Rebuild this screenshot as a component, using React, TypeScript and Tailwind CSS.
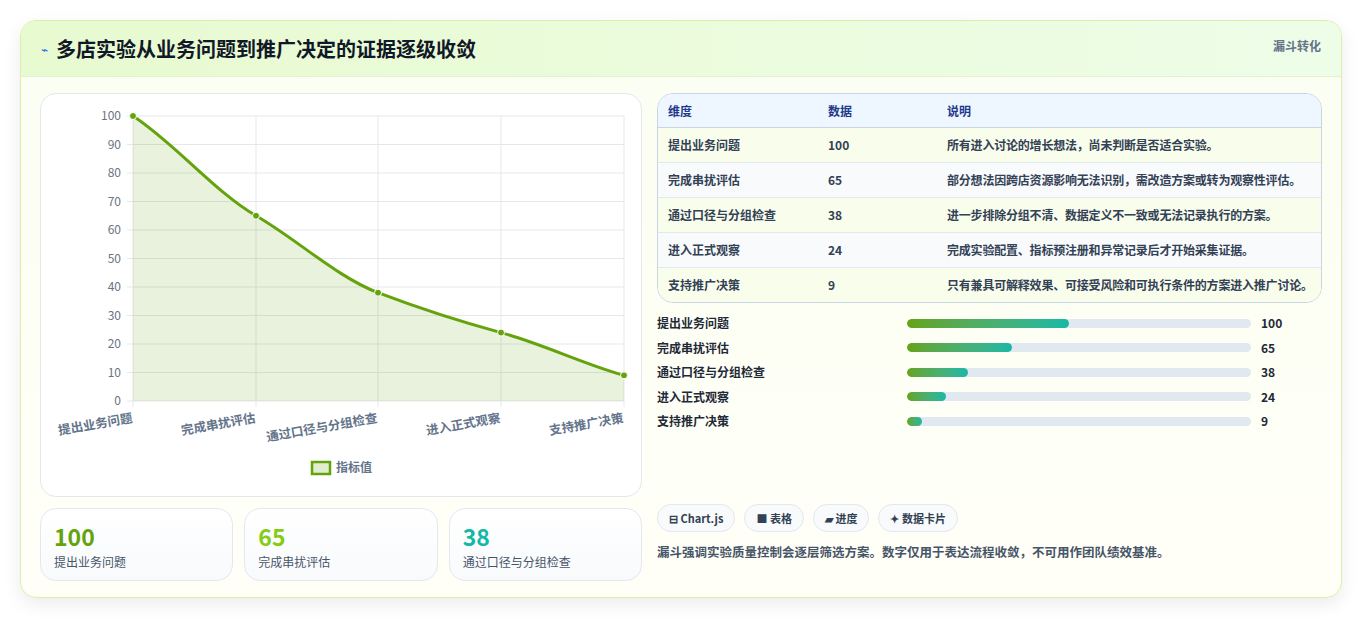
const rows = [
  ["提出业务问题", 100, "所有进入讨论的增长想法，尚未判断是否适合实验。"],
  ["完成串扰评估", 65, "部分想法因跨店资源影响无法识别，需改造方案或转为观察性评估。"],
  ["通过口径与分组检查", 38, "进一步排除分组不清、数据定义不一致或无法记录执行的方案。"],
  ["进入正式观察", 24, "完成实验配置、指标预注册和异常记录后才开始采集证据。"],
  ["支持推广决策", 9, "只有兼具可解释效果、可接受风险和可执行条件的方案进入推广讨论。"],
] as const;

function Chart() {
  const xs = [92, 215, 337, 460, 583];
  const y = (v: number) => 22 + (100 - v) * 2.85;
  const pts = rows.map((r, i) => [xs[i], y(r[1])]);
  const slope = (i: number) => {
    const a = pts[Math.max(0, i - 1)], b = pts[Math.min(pts.length - 1, i + 1)];
    return (b[1] - a[1]) / (b[0] - a[0]);
  };
  const line = "M" + pts.map((p, i) => {
    if (i === 0) return `${p[0]},${p[1]}`;
    const prev = pts[i - 1];
    const dx = (p[0] - prev[0]) / 3;
    return ` C${prev[0] + dx},${prev[1] + slope(i - 1) * dx * 0.8} ${p[0] - dx},${p[1] - slope(i) * dx * 0.8} ${p[0]},${p[1]}`;
  }).join("");
  return (
    <svg width="600" height="400" className="block">
      {[0, 10, 20, 30, 40, 50, 60, 70, 80, 90, 100].map((v) => (
        <g key={v}>
          <line x1={86} x2={583} y1={y(v)} y2={y(v)} stroke="#e5e7eb" />
          <text x={80} y={y(v) + 4} textAnchor="end" fontSize="12" fill="#6b7280">{v}</text>
        </g>
      ))}
      {xs.map((x) => <line key={x} x1={x} x2={x} y1={22} y2={313} stroke="#e5e7eb" />)}
      <path d={line + ` L583,307 L92,307 Z`} fill="#65a30d" fillOpacity="0.14" />
      <path d={line} fill="none" stroke="#65a30d" strokeWidth="3" />
      {pts.map((p, i) => <circle key={i} cx={p[0]} cy={p[1]} r="3.5" fill="#65a30d" stroke="#fff" strokeWidth="1" />)}
      {rows.map((r, i) => (
        <text key={i} x={xs[i]} y={328} textAnchor="end" fontSize="12.5" fontWeight="600" fill="#64748b" transform={`rotate(-10 ${xs[i]} 328)`}>{r[0]}</text>
      ))}
      <rect x={271} y={368} width={18} height={12} fill="#65a30d" fillOpacity="0.2" stroke="#65a30d" strokeWidth="2.5" />
      <text x={295} y={378} fontSize="12" fill="#64748b" fontWeight="600">指标值</text>
    </svg>
  );
}

export default function App() {
  const f = { fontFamily: '"Noto Sans CJK SC", "Noto Sans", sans-serif' };
  return (
    <div style={f} className="w-[1363px] h-[621px] bg-white pt-[20px] pl-[20px]">
      <div className="w-[1322px] h-[578px] rounded-2xl border border-[#d9f0a8] bg-gradient-to-b from-[#fbfef2] to-[#fffff7] shadow-[0_6px_18px_rgba(0,0,0,0.08)] overflow-hidden">
        <div className="h-[56px] flex items-center justify-between px-[20px] bg-gradient-to-r from-[#e8fad0] to-[#eefde8] border-b border-[#e3f1d0]">
          <div className="flex items-center gap-[8px]">
            <span className="text-[12px] text-[#2563eb]">⌁</span>
            <span className="text-[20px] font-bold text-[#111827]">多店实验从业务问题到推广决定的证据逐级收敛</span>
          </div>
          <span className="self-start mt-[16px] text-[12px] font-semibold text-[#64748b]">漏斗转化</span>
        </div>
        <div className="flex gap-[15px] px-[19px] pt-[16px]">
          <div className="w-[603px] flex flex-col gap-[11px]">
            <div className="h-[404px] rounded-2xl border border-[#e5e7eb] bg-white"><Chart /></div>
            <div className="grid grid-cols-3 gap-[11px]">
              {rows.slice(0, 3).map((r, i) => (
                <div key={i} className="h-[73px] rounded-2xl border border-[#e2e8f0] bg-gradient-to-b from-white to-[#f8fafc] px-[13px] pt-[12px]">
                  <div className={`text-[23px] font-bold leading-[30px] ${["text-[#65a30d]", "text-[#84cc16]", "text-[#14b8a6]"][i]}`}>{r[1]}</div>
                  <div className="text-[12px] text-[#475569] mt-[2px]">{r[0]}</div>
                </div>
              ))}
            </div>
          </div>
          <div className="w-[667px] flex flex-col">
            <div className="rounded-2xl border border-[#cbd5e1] overflow-hidden bg-white text-[12px] leading-[17px]">
              <div className="flex h-[34px] items-center bg-[#eef6ff] text-[#1e3a8a] font-semibold border-b border-[#cbd5e1]">
                <div className="w-[170px] pl-[10px]">维度</div><div className="w-[119px]">数据</div><div>说明</div>
              </div>
              {rows.map((r, i) => (
                <div key={i} className={`flex pt-[8px] pb-[9px] font-semibold text-[#334155] ${i % 2 === 0 ? "bg-[#f9fdec]" : "bg-[#f8fafc]"} ${i < 4 ? "border-b border-[#e2e8f0]" : ""}`}>
                  <div className="w-[170px] pl-[10px] shrink-0">{r[0]}</div>
                  <div className="w-[119px] shrink-0">{r[1]}</div>
                  <div className="pr-[6px] tracking-[-0.2px]">{r[2]}</div>
                </div>
              ))}
            </div>
            <div className="mt-[11px] flex flex-col gap-[6.5px]">
              {rows.map((r, i) => (
                <div key={i} className="flex items-center h-[18px] text-[12px] font-semibold text-[#1f2937]">
                  <div className="w-[250px]">{r[0]}</div>
                  <div className="w-[344px] h-[9px] rounded-full bg-[#e2e8f0] overflow-hidden">
                    <div className="h-full rounded-full bg-gradient-to-r from-[#65a30d] to-[#14b8a6]" style={{ width: `${r[1] * 0.47}%` }} />
                  </div>
                  <div className="ml-[10px]">{r[1]}</div>
                </div>
              ))}
            </div>
            <div className="mt-[74px] flex gap-[9px] text-[11px] font-semibold text-[#334155]">
              {["⊟ Chart.js", "■ 表格", "▰ 进度", "✦ 数据卡片"].map((c) => (
                <span key={c} className="h-[28px] px-[11px] flex items-center rounded-full border border-[#e2e8f0] bg-[#f8fafc]">{c}</span>
              ))}
            </div>
            <div className="mt-[11px] text-[12.5px] font-semibold text-[#475569]">漏斗强调实验质量控制会逐层筛选方案。数字仅用于表达流程收敛，不可用作团队绩效基准。</div>
          </div>
        </div>
      </div>
    </div>
  );
}
